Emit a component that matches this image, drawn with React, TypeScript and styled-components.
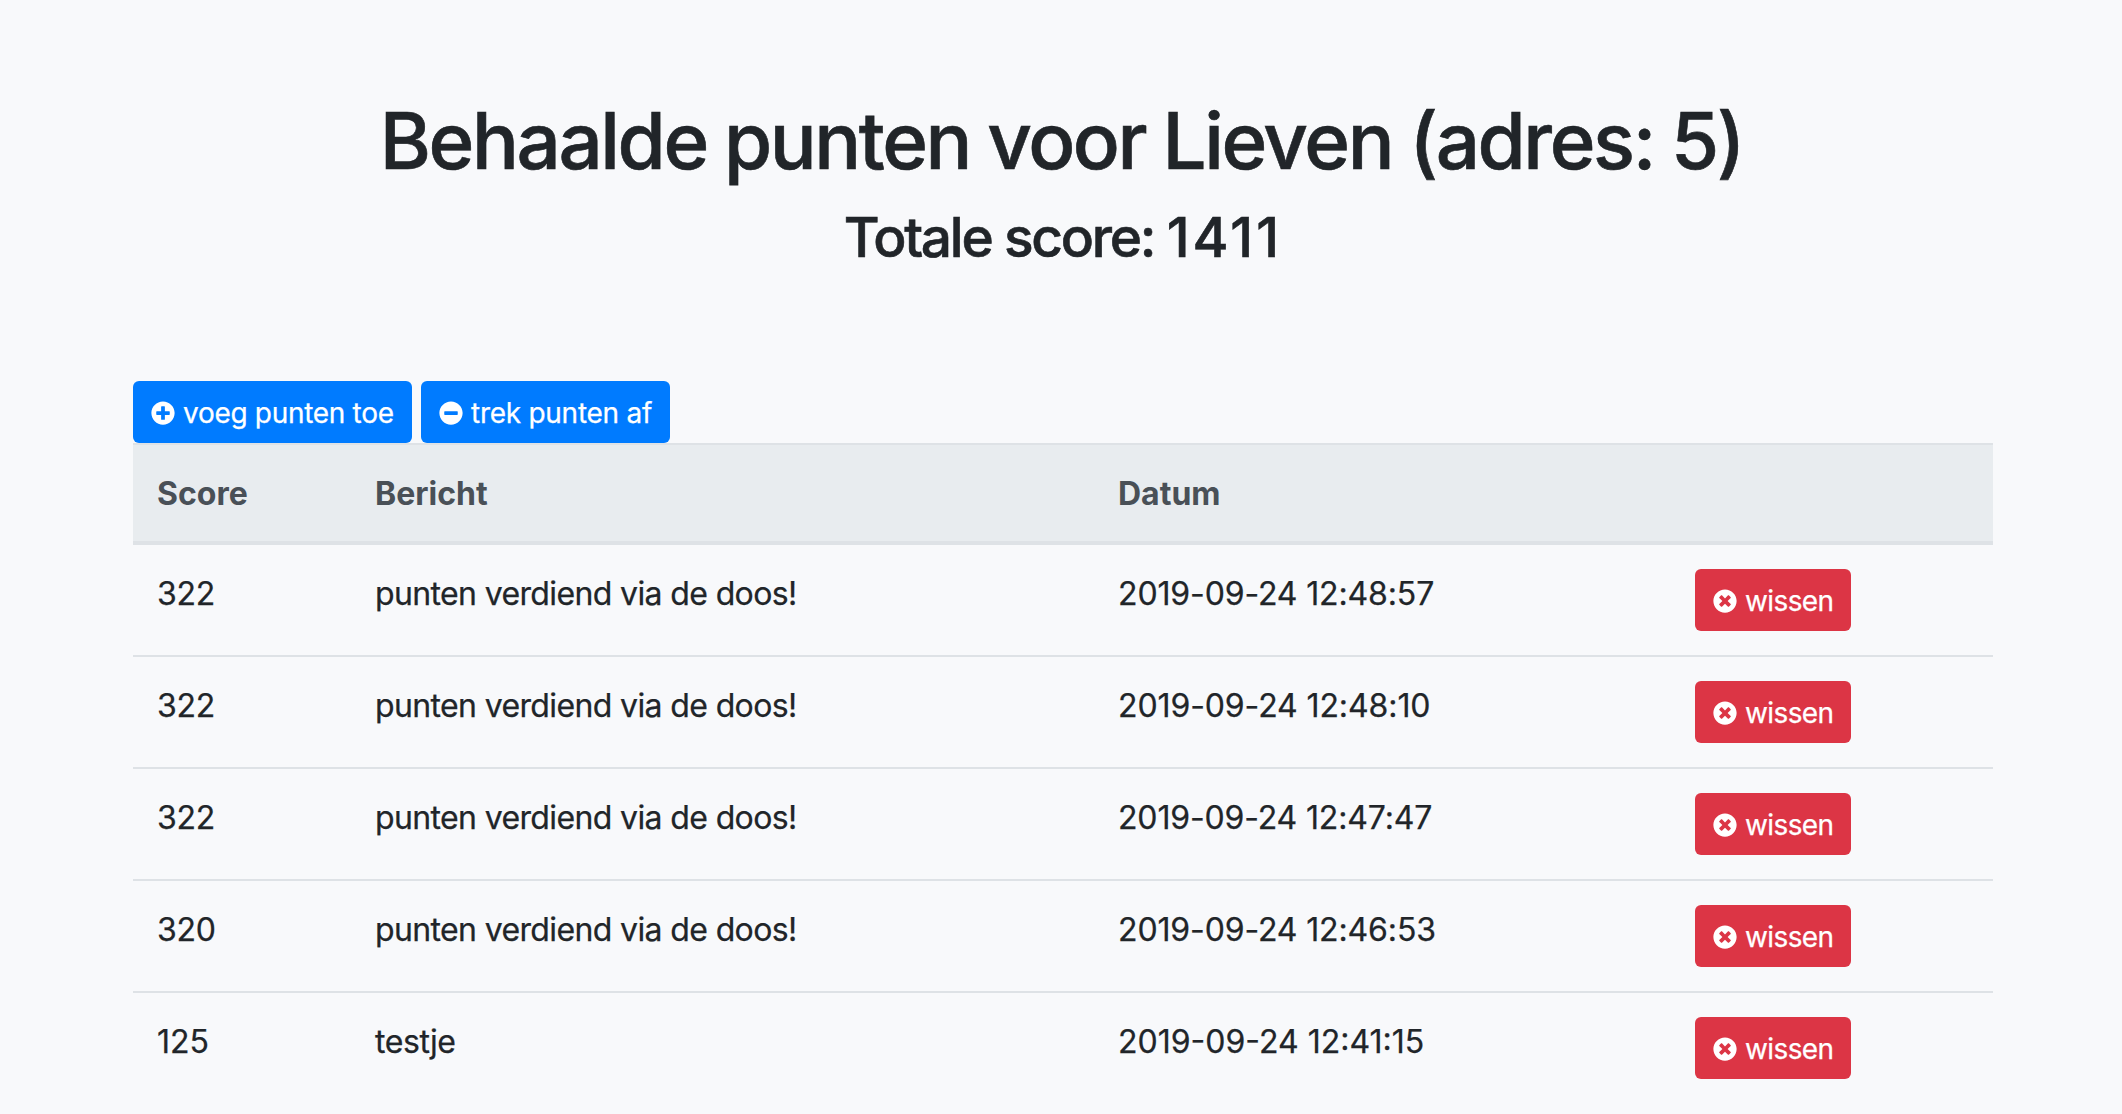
import React from 'react';
import styled, { createGlobalStyle } from 'styled-components';
import { FaPlusCircle, FaMinusCircle, FaTimesCircle } from 'react-icons/fa';

const Global = createGlobalStyle`
  *, *::before, *::after { box-sizing: border-box; }
  body { margin: 0; background: #f8f9fb; overflow: hidden; }
`;

const Page = styled.main`
  height: 1114px;
  overflow: hidden;
  padding: 93px 129px 0 133px;
  background: #f8f9fb;
  color: #212529;
  font-family: Inter, sans-serif;
  font-size: 32px;
  line-height: 48px;
`;
const Header = styled.header`
  text-align: center;
  height: 288px;
  margin-right: 3px;
  white-space: nowrap;
  -webkit-text-stroke: 0.6px currentColor;
`;
const Title = styled.h1`
  margin: 0 0 18px;
  font-size: 78px;
  font-weight: 500;
  line-height: 96px;
  word-spacing: -1.3px;
`;
const Subtitle = styled.h2`
  margin: 0;
  padding-left: 3px;
  font-size: 55px;
  font-weight: 500;
  line-height: 60px;
`;
const Fit = styled.span<{ $spacing: number }>`
  letter-spacing: ${p => p.$spacing}px;
`;
const Toolbar = styled.div`
  display: flex;
  gap: 9px;
`;
const Button = styled.button<{ $danger?: boolean; $width: number }>`
  display: flex;
  align-items: center;
  gap: 8px;
  width: ${p => p.$width}px;
  height: 62px;
  padding: 2px 0 0 18px;
  border: 0;
  border-radius: 6px;
  background: ${p => (p.$danger ? '#dc3545' : '#007bff')};
  color: #fff;
  font: 400 28px/42px Inter, sans-serif;
  white-space: nowrap;
  -webkit-text-stroke: 0.25px currentColor;
  svg { width: 24px; height: 24px; flex: none; }
`;
const Table = styled.table`
  width: 1860px;
  table-layout: fixed;
  border-collapse: separate;
  border-spacing: 0;
`;
const HeadCell = styled.th<{ $width: number }>`
  width: ${p => p.$width}px;
  height: 102px;
  padding: 2px 24px 0;
  border-top: 2px solid #dee2e6;
  border-bottom: 4px solid #dee2e6;
  background: #e8ecef;
  color: #495057;
  font-weight: 700;
  text-align: left;
`;
const Cell = styled.td<{ $action?: boolean }>`
  height: 110px;
  padding: ${p => (p.$action ? 24 : 25)}px 24px 0;
  vertical-align: top;
  white-space: nowrap;
  -webkit-text-stroke: 0.25px currentColor;
  tr + tr & { height: 112px; border-top: 2px solid #dee2e6; }
`;

const rows = [
  { score: 322, message: 'punten verdiend via de doos!', date: '2019-09-24 12:48:57', tracking: [-0.3, -0.63, -0.13] },
  { score: 322, message: 'punten verdiend via de doos!', date: '2019-09-24 12:48:10', tracking: [-0.3, -0.63, -0.1] },
  { score: 322, message: 'punten verdiend via de doos!', date: '2019-09-24 12:47:47', tracking: [-0.3, -0.63, -0.15] },
  { score: 320, message: 'punten verdiend via de doos!', date: '2019-09-24 12:46:53', tracking: [-0.3, -0.63, -0.13] },
  { score: 125, message: 'testje', date: '2019-09-24 12:41:15', tracking: [0, -0.4, 0] },
];

export default function App() {
  return (
    <Page>
      <Global />
      <Header>
        <Title><Fit $spacing={-2.4}>Behaalde punten voor Lieven (adres: 5)</Fit></Title>
        <Subtitle><Fit $spacing={-2.25}>Totale score: </Fit><Fit $spacing={3.1}>1411</Fit></Subtitle>
      </Header>
      <Toolbar>
        <Button $width={279}><FaPlusCircle /><Fit $spacing={-0.3}>voeg punten toe</Fit></Button>
        <Button $width={249}><FaMinusCircle /><Fit $spacing={-0.27}>trek punten af</Fit></Button>
      </Toolbar>
      <Table>
        <thead>
          <tr>
            <HeadCell $width={218}>Score</HeadCell>
            <HeadCell $width={743}>Bericht</HeadCell>
            <HeadCell $width={577}>Datum</HeadCell>
            <HeadCell $width={322} />
          </tr>
        </thead>
        <tbody>
          {rows.map(row => (
            <tr key={row.date}>
              <Cell><Fit $spacing={row.tracking[0]}>{row.score}</Fit></Cell>
              <Cell><Fit $spacing={row.tracking[1]}>{row.message}</Fit></Cell>
              <Cell><Fit $spacing={row.tracking[2]}>{row.date}</Fit></Cell>
              <Cell $action>
                <Button $danger $width={156}><FaTimesCircle /><Fit $spacing={-0.6}>wissen</Fit></Button>
              </Cell>
            </tr>
          ))}
        </tbody>
      </Table>
    </Page>
  );
}
